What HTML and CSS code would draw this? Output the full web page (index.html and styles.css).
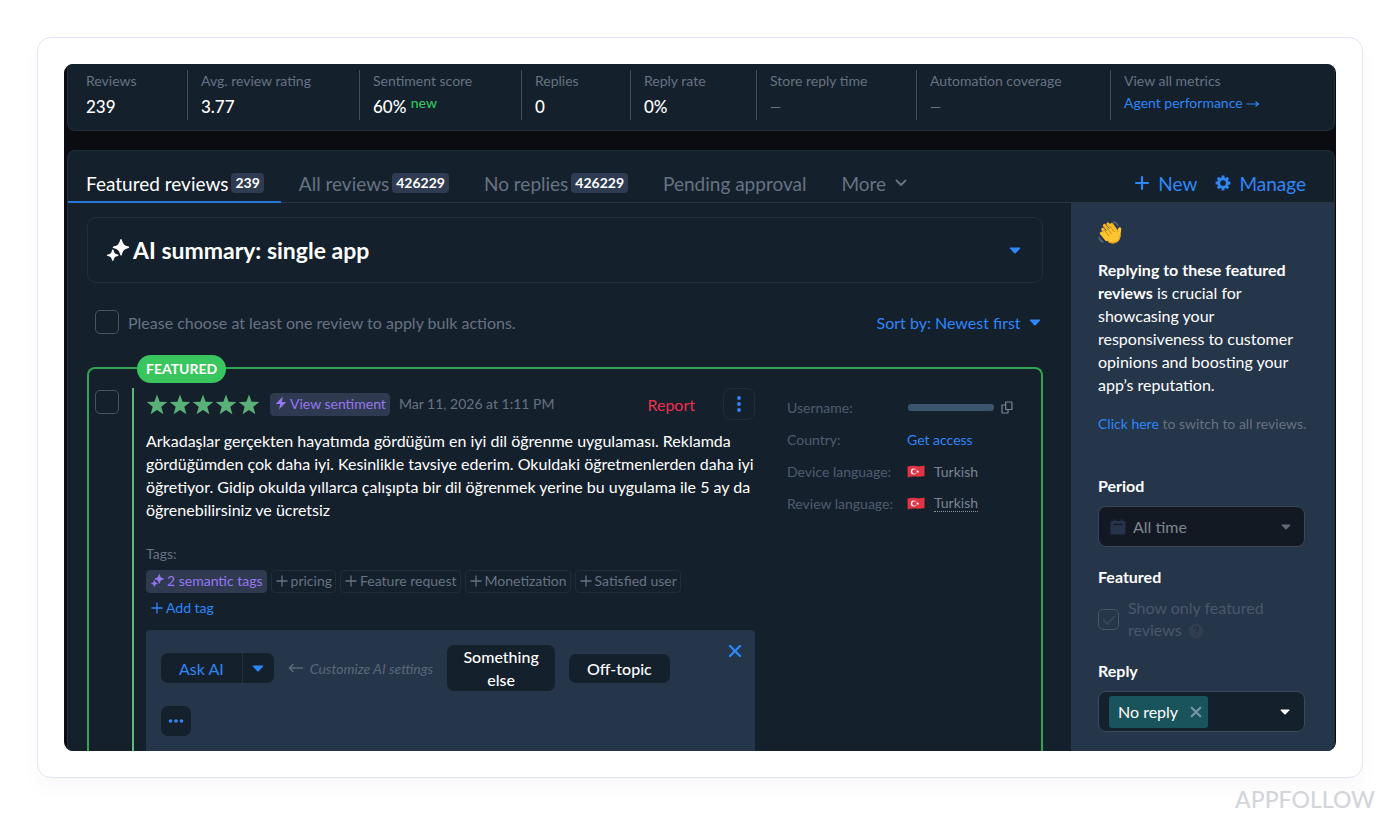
FILE: index.html
```html
<!DOCTYPE html>
<html lang="en">
<head>
<meta charset="utf-8">
<meta name="viewport" content="width=device-width, initial-scale=1">
<title>Featured reviews</title>
<link rel="stylesheet" href="styles.css">
</head>
<body>
<svg class="defs" aria-hidden="true">
  <symbol id="sparkle" viewBox="0 0 22 22"><path stroke="currentColor" stroke-width="1.400" stroke-linejoin="round" d="M14 .8c1.300 4.900 2.600 6.200 7.500 7.500c-4.900 1.300-6.200 2.600-7.500 7.500c-1.300-4.900-2.600-6.200-7.500-7.500c4.900-1.300 6.200-2.600 7.500-7.500z"/><path stroke="currentColor" stroke-width="1.400" stroke-linejoin="round" d="M5.800 11.200c.9 3.600 1.500 4.200 5 5c-3.500.8-4.100 1.400-5 5c-.9-3.600-1.500-4.200-5-5c3.500-.8 4.100-1.400 5-5z"/></symbol>
  <symbol id="caret" viewBox="0 0 12 7"><path d="M1.200 0.500h9.600q.9.300.3 1.100L6.700 6.200q-.7.600-1.400 0L.9 1.600Q.3.800 1.200.5z"/></symbol>
  <symbol id="plus" viewBox="0 0 12 12"><path d="M6 .5v11M.5 6h11" fill="none" stroke="currentColor" stroke-width="1.300"/></symbol>
  <symbol id="cross" viewBox="0 0 14 14"><path d="M2 2l10 10M12 2L2 12" fill="none" stroke="currentColor" stroke-width="2.400" stroke-linecap="round"/></symbol>
  <symbol id="star" viewBox="0 0 22 21"><path d="M11 0.500l2.600 7.200 7.700.3-6 4.700 2.100 7.500L11 15.900l-6.400 4.300 2.100-7.500-6-4.700 7.700-.3z"/></symbol>
  <symbol id="flag" viewBox="0 0 18 13"><path d="M.5 1.500Q4.500.3 9 1t8.500-.5v10.500q-4 1.200-8.500.6T.7 12.500z" fill="#e03343"/><circle cx="6.800" cy="6.500" r="2.900" fill="#fff"/><circle cx="7.600" cy="6.500" r="2.300" fill="#e03343"/><path d="M10.700 4.900l.4 1.100 1.200.1-.9.700.3 1.100-1-.6-1 .6.300-1.100-.9-.7 1.200-.1z" fill="#fff"/></symbol>
</svg>

<main class="card">
  <div class="app">
    <section class="stats" aria-label="Metrics">
      <div class="stat"><span class="stat-label">Reviews</span><span class="stat-value">239</span></div>
      <div class="stat"><span class="stat-label">Avg. review rating</span><span class="stat-value">3.77</span></div>
      <div class="stat"><span class="stat-label">Sentiment score</span><span class="stat-value">60% <sup class="new">new</sup></span></div>
      <div class="stat"><span class="stat-label">Replies</span><span class="stat-value">0</span></div>
      <div class="stat"><span class="stat-label">Reply rate</span><span class="stat-value">0%</span></div>
      <div class="stat"><span class="stat-label">Store reply time</span><span class="stat-value empty">—</span></div>
      <div class="stat"><span class="stat-label">Automation coverage</span><span class="stat-value empty">—</span></div>
      <div class="stat"><span class="stat-label">View all metrics</span><a class="link stat-link" href="#">Agent performance <svg class="i-arrow" viewBox="0 0 14 8"><path d="M0.500 4h12M9.500 1.500L12.500 4l-3 2.500" fill="none" stroke="currentColor" stroke-width="1.200"/></svg></a></div>
    </section>

    <section class="panel">
      <header class="tabbar">
        <nav class="tabs">
          <a class="tab active" href="#">Featured reviews <span class="count">239</span></a>
          <a class="tab" href="#">All reviews <span class="count">426229</span></a>
          <a class="tab" href="#">No replies <span class="count">426229</span></a>
          <a class="tab" href="#">Pending approval</a>
          <button class="tab more" type="button">More <svg class="i-chevron" viewBox="0 0 14 14"><path d="M2.500 4.500L7 9l4.500-4.500" fill="none" stroke="currentColor" stroke-width="2" stroke-linecap="round" stroke-linejoin="round"/></svg></button>
        </nav>
        <div class="tab-actions">
          <button class="action" type="button"><svg class="i-16" viewBox="0 0 16 16"><path d="M8 2v12M2 8h12" fill="none" stroke="currentColor" stroke-width="2.200" stroke-linecap="round"/></svg>New</button>
          <button class="action" type="button"><svg class="i-16" viewBox="0 0 16 16"><circle cx="8" cy="8" r="4.300" fill="none" stroke="currentColor" stroke-width="2.900"/><path d="M8 .6v2.400M8 13v2.400M.6 8H3M13 8h2.400M2.800 2.800l1.700 1.700M11.500 11.500l1.700 1.700M13.200 2.800l-1.700 1.700M4.500 11.500l-1.700 1.700" fill="none" stroke="currentColor" stroke-width="2.800"/></svg>Manage</button>
        </div>
      </header>

      <div class="columns">
        <div class="content">
          <button class="summary" type="button">
            <svg class="i-22"><use href="#sparkle"/></svg>
            <span>AI summary: single app</span>
            <svg class="i-caret push"><use href="#caret"/></svg>
          </button>

          <div class="bulk">
            <label class="bulk-label"><input class="check" type="checkbox">Please choose at least one review to apply bulk actions.</label>
            <label class="sort">Sort by:&nbsp;<select class="sort-select"><option>Newest first</option></select><svg class="i-caret"><use href="#caret"/></svg></label>
          </div>

          <article class="review">
            <span class="ribbon">FEATURED</span>
            <input class="check" type="checkbox" aria-label="Select review">
            <div class="review-body">
              <div class="review-main">
                <div class="meta">
                  <span class="stars" role="img" aria-label="5 stars"><svg class="i-star"><use href="#star"/></svg><svg class="i-star"><use href="#star"/></svg><svg class="i-star"><use href="#star"/></svg><svg class="i-star"><use href="#star"/></svg><svg class="i-star"><use href="#star"/></svg></span>
                  <button class="chip purple" type="button"><svg class="i-bolt" viewBox="0 0 12 14"><path d="M7.800.5L.8 8h4.400L4 13.500 11.200 6H6.800z"/></svg>View sentiment</button>
                  <time class="date" datetime="2026-03-11T13:11">Mar 11, 2026 at 1:11 PM</time>
                  <button class="report" type="button">Report</button>
                  <button class="kebab" type="button" aria-label="More actions"><svg class="i-dots" viewBox="0 0 4 16"><circle cx="2" cy="2" r="1.900"/><circle cx="2" cy="8" r="1.900"/><circle cx="2" cy="14" r="1.900"/></svg></button>
                </div>
                <p class="review-text" lang="tr">Arkadaşlar gerçekten hayatımda gördüğüm en iyi dil öğrenme uygulaması. Reklamda gördüğümden çok daha iyi. Kesinlikle tavsiye ederim. Okuldaki öğretmenlerden daha iyi öğretiyor. Gidip okulda yıllarca çalışıpta bir dil öğrenmek yerine bu uygulama ile 5 ay da öğrenebilirsiniz ve ücretsiz</p>
                <div class="tags-title">Tags:</div>
                <div class="tags">
                  <button class="chip purple" type="button"><svg class="i-spark"><use href="#sparkle"/></svg>2 semantic tags</button>
                  <button class="chip" type="button"><svg class="i-plus"><use href="#plus"/></svg>pricing</button>
                  <button class="chip" type="button"><svg class="i-plus"><use href="#plus"/></svg>Feature request</button>
                  <button class="chip" type="button"><svg class="i-plus"><use href="#plus"/></svg>Monetization</button>
                  <button class="chip" type="button"><svg class="i-plus"><use href="#plus"/></svg>Satisfied user</button>
                  <button class="chip add" type="button"><svg class="i-plus"><use href="#plus"/></svg>Add tag</button>
                </div>
                <div class="ask">
                  <button class="close" type="button" aria-label="Close"><svg class="i-14"><use href="#cross"/></svg></button>
                  <div class="ask-row">
                    <div class="split">
                      <button class="split-main" type="button">Ask AI</button>
                      <button class="split-caret" type="button" aria-label="AI settings"><svg class="i-caret"><use href="#caret"/></svg></button>
                    </div>
                    <span class="hint"><svg class="i-16" viewBox="0 0 16 16"><path d="M15 8H1.500M5.500 4l-4 4 4 4" fill="none" stroke="currentColor" stroke-width="1.600"/></svg><em>Customize AI settings</em></span>
                    <button class="topic wrap" type="button">Something else</button>
                    <button class="topic" type="button">Off-topic</button>
                  </div>
                  <button class="ellipsis" type="button" aria-label="More topics"><svg class="i-ellipsis" viewBox="0 0 16 4"><circle cx="2.500" cy="2" r="1.800"/><circle cx="8" cy="2" r="1.800"/><circle cx="13.500" cy="2" r="1.800"/></svg></button>
                </div>
              </div>
              <dl class="facts">
                <dt>Username:</dt><dd class="user"><span class="masked"></span><svg class="i-copy" viewBox="0 0 12 13"><path d="M4.700 1h6.200v7.500H4.700zM4.700 4H1v8h6V8.500" fill="none" stroke="currentColor" stroke-width="1.200" stroke-linejoin="round"/></svg></dd>
                <dt>Country:</dt><dd><a class="link" href="#">Get access</a></dd>
                <dt>Device language:</dt><dd><svg class="i-flag"><use href="#flag"/></svg>Turkish</dd>
                <dt>Review language:</dt><dd><svg class="i-flag"><use href="#flag"/></svg><span class="dotted">Turkish</span></dd>
              </dl>
            </div>
          </article>
        </div>

        <aside class="sidebar">
          <svg class="i-wave" viewBox="0 0 24 24"><path d="M4.800 8.200L10.500 16M6.500 4.500L13 12.500M10 3l6 7.500M13.700 3.500l4.300 6" stroke="#f5b62e" stroke-width="3.200" stroke-linecap="round" fill="none"/><path d="M4 12l4.500 6.500q3 4.500 8 3.800 5.500-1.300 6-7l.8-7.800q-1.600-2.500-3.300.3L19 11 14 6l-6 4z" fill="#fdc52f"/><path d="M3.500 12.200L8.500 18.500" stroke="#fdc52f" stroke-width="3.200" stroke-linecap="round"/><path d="M6 8.500l5 6.500M8.500 6.500l5 6.500M12 5.500l4.500 5.500" stroke="#c47f16" stroke-width=".9" fill="none"/><path d="M10 20.500q4.500 3 9.500-.5 2.500-2.500 2.800-6" stroke="#f09a1a" stroke-width="1" fill="none"/><path d="M15.500 1.200q3 .3 4.300 3.300M1.200 16.500q.5 3 3.500 4.300" stroke="#56616f" stroke-width="1.800" fill="none" stroke-linecap="round"/></svg>
          <p class="intro"><strong>Replying to these featured reviews</strong> is crucial for showcasing your responsiveness to customer opinions and boosting your app’s reputation.</p>
          <p class="switch"><a class="link" href="#">Click here</a> to switch to all reviews.</p>

          <label class="field-title" for="period">Period</label>
          <div class="period">
            <svg class="i-calendar" viewBox="0 0 16 16"><path d="M3.500.5h2V2h5V.5h2V2H14q1.500 0 1.500 1.500v10.500q0 1.500-1.500 1.500H2Q.5 15.500.5 14V3.500Q.5 2 2 2h1.500z" fill="#26334a"/><path d="M3.500 5.500h9" stroke="#131923" stroke-width="1.300"/></svg>
            <select class="period-select" id="period"><option>All time</option></select>
            <svg class="i-caret-sm"><use href="#caret"/></svg>
          </div>

          <div class="field-title">Featured</div>
          <label class="only"><input class="check checked" type="checkbox" checked disabled><span>Show only featured reviews <svg class="i-help" viewBox="0 0 16 16"><circle cx="8" cy="8" r="7.500" fill="#303e50"/><path d="M5.800 6.300q.2-2 2.200-2t2.200 1.800q0 1.200-1.200 1.800-1 .5-1 1.400M8 10.800v1.500" stroke="#223145" stroke-width="1.500" fill="none"/></svg></span></label>

          <div class="field-title">Reply</div>
          <div class="reply">
            <span class="token">No reply<button class="token-x" type="button" aria-label="Remove No reply"><svg class="i-12"><use href="#cross"/></svg></button></span>
            <button class="reply-caret" type="button" aria-label="Reply options"><svg class="i-caret-sm"><use href="#caret"/></svg></button>
          </div>
        </aside>
      </div>
    </section>
  </div>
</main>
<footer class="brand">APPFOLLOW</footer>
</body>
</html>
```
FILE: styles.css
```css
:root {
  --panel: #15202d;
  --raised: #25354a;
  --line: #222d3a;
  --muted: #677282;
  --dim: #4f5c6e;
  --blue: #2f86f7;
  --green: #30a453;
  --purple: #9677f0;
}

* { box-sizing: border-box; }

body {
  margin: 0;
  padding-top: 37px;
  background: #fff;
  color: #fff;
  font: 16px/23px Lato, sans-serif;
}

button, select, input { font: inherit; color: inherit; margin: 0; }
button { padding: 0; border: 0; background: none; cursor: pointer; }
select { appearance: none; border: 0; background: none; }
p, dl, dd { margin: 0; }
svg { flex: none; fill: currentColor; }
.defs { position: absolute; width: 0; height: 0; }
.link { color: var(--blue); text-decoration: none; }

.i-22 { width: 22px; height: 22px; }
.i-16 { width: 16px; height: 16px; }
.i-14 { width: 14px; height: 14px; }
.i-12 { width: 12px; height: 12px; }
.i-caret { width: 12px; height: 7px; }
.i-caret-sm { width: 10px; height: 6px; }
.i-plus { width: 12px; height: 12px; }
.i-spark { width: 13px; height: 13px; }
.i-star { width: 22px; height: 21px; }
.i-bolt { width: 12px; height: 14px; }
.i-chevron { width: 14px; height: 14px; }
.i-arrow { width: 14px; height: 8px; }
.i-dots { width: 4px; height: 16px; }
.i-ellipsis { width: 16px; height: 4px; }
.i-copy { width: 12px; height: 13px; }
.i-flag { width: 18px; height: 13px; }
.i-wave { width: 24px; height: 24px; }
.i-help { width: 16px; height: 16px; margin-left: 2px; vertical-align: -3px; }

.card {
  margin: 0 37px;
  padding: 26px;
  border: 1px solid #dfe5f7;
  border-radius: 14px;
  background: #fff;
  box-shadow: 0 10px 20px rgba(0, 0, 0, 0.03);
}

.app {
  padding: 0 1px 0 3px;
  overflow: hidden;
  border-radius: 9px;
  background: #0b0c11;
}

.stats {
  display: grid;
  grid-template-columns: 115fr 172fr 162fr 109fr 126fr 160fr 194fr 224fr;
  margin-bottom: 19px;
  padding: 6px 0 10px 4px;
  border: 1px solid var(--line);
  border-top: 0;
  border-radius: 0 0 8px 8px;
  background: var(--panel);
}

.stat {
  display: flex;
  flex-direction: column;
  gap: 3px;
  height: 50px;
  padding-left: 14px;
  white-space: nowrap;
}

.stat + .stat { padding-left: 13px; border-left: 1px solid #414c5c; }
.stat-label { color: var(--muted); font-size: 14px; line-height: 22px; }
.stat-value { font-size: 17px; font-weight: 500; }
.stat-value.empty { color: var(--muted); font-size: 14px; }
.stat-link { font-size: 14px; line-height: 16px; }
.new { color: #35c45d; font-size: 14px; line-height: 0; vertical-align: 5px; }

.panel {
  border: 1px solid var(--line);
  border-bottom: 0;
  border-radius: 8px 8px 0 0;
  background: var(--panel);
}

.tabbar {
  display: flex;
  justify-content: space-between;
  padding-top: 14px;
  border-bottom: 1px solid #283442;
}

.tabs { display: flex; margin-bottom: -1px; }

.tab {
  display: flex;
  align-items: center;
  gap: 3px;
  height: 38px;
  padding: 0 17px 0 18px;
  border-bottom: 2px solid transparent;
  color: var(--muted);
  font-size: 19px;
  text-decoration: none;
  white-space: nowrap;
}

.tab.active { border-color: #2776d8; color: #fff; }
.more { gap: 8px; }

.count {
  padding: 0 4px;
  border-radius: 4px;
  background: #2f3b50;
  color: #fff;
  font-size: 14px;
  font-weight: 700;
  line-height: 20px;
}

.tab-actions { display: flex; gap: 18px; padding-right: 28px; }

.action {
  display: flex;
  align-items: center;
  gap: 8px;
  height: 36px;
  color: var(--blue);
  font-size: 19px;
}

.columns { display: flex; }
.content { flex: 1; min-width: 0; padding: 14px 28px 0 19px; }

.summary {
  display: flex;
  align-items: center;
  gap: 4px;
  width: 100%;
  height: 66px;
  padding: 0 21px 0 19px;
  border: 1px solid var(--line);
  border-radius: 9px;
  font-size: 23px;
  font-weight: 700;
}

.push { margin-left: auto; color: var(--blue); }

.check {
  appearance: none;
  flex: none;
  width: 24px;
  height: 24px;
  border: 1px solid #485365;
  border-radius: 5px;
}

.bulk {
  display: flex;
  align-items: center;
  justify-content: space-between;
  padding: 27px 2px 0 8px;
}

.bulk-label { display: flex; align-items: center; gap: 9px; color: var(--muted); }
.sort { display: flex; align-items: center; color: var(--blue); }
.sort-select { padding: 0 8px 0 0; }

.review {
  position: relative;
  display: flex;
  gap: 13px;
  margin-top: 33px;
  padding: 19px 26px 0 6px;
  border: 2px solid var(--green);
  border-bottom: 0;
  border-radius: 8px 8px 0 0;
}

.review > .check { margin-top: 2px; }

.ribbon {
  position: absolute;
  top: -14px;
  left: 48px;
  padding: 0 9px;
  border-radius: 14px;
  background: #3ac65f;
  font-size: 14px;
  font-weight: 700;
  line-height: 28px;
}

.review-body {
  display: flex;
  flex: 1;
  gap: 32px;
  min-width: 0;
  padding-left: 12px;
  border-left: 2px solid #63b57a;
}

.review-main { flex: 1; min-width: 0; }
.meta { display: flex; align-items: center; height: 32px; }
.stars { display: flex; gap: 1px; margin-right: 10px; color: #5ab177; }

.chip {
  display: flex;
  align-items: center;
  gap: 3px;
  height: 23px;
  padding: 0 3px 2px 4px;
  border: 1px solid var(--line);
  border-radius: 4px;
  color: var(--muted);
  font-size: 14px;
}

.chip.purple { border-color: #2f3a50; background: #2f3a50; color: var(--purple); }
.chip.add { border-color: transparent; color: var(--blue); }
.date { margin-left: 9px; padding-bottom: 2px; color: var(--muted); font-size: 14px; }
.report { margin-left: auto; color: #ee2f4b; }

.kebab {
  display: grid;
  place-items: center;
  width: 32px;
  height: 32px;
  margin-left: 28px;
  border: 1px solid var(--line);
  border-radius: 8px;
  color: var(--blue);
}

.review-text { margin-top: 9px; }
.tags-title { margin-top: 21px; color: var(--muted); font-size: 14px; }
.tags { display: flex; flex-wrap: wrap; gap: 4px; padding-top: 5px; }

.ask {
  position: relative;
  margin-top: 10px;
  padding: 15px;
  border-radius: 4px 4px 0 0;
  background: var(--raised);
}

.close { position: absolute; top: 14px; right: 13px; display: flex; color: var(--blue); }
.ask-row { display: flex; align-items: center; gap: 14px; margin-bottom: 15px; }
.split { display: flex; height: 30px; border-radius: 7px; background: var(--panel); color: var(--blue); }
.split-main { padding: 0 18px; }
.split-caret { display: grid; place-items: center; width: 32px; border-left: 1px solid #25303e; }

.hint {
  display: flex;
  align-items: center;
  gap: 6px;
  color: #5a687a;
  font-size: 14px;
  white-space: nowrap;
}

.topic { padding: 3px 18px; border-radius: 7px; background: var(--panel); font-weight: 500; }
.topic.wrap { max-width: 108px; padding: 0 16px; }

.ellipsis {
  display: grid;
  place-items: center;
  width: 30px;
  height: 30px;
  border-radius: 7px;
  background: var(--panel);
  color: var(--blue);
}

.facts {
  display: grid;
  grid-template-columns: 120px 108px;
  align-content: start;
  gap: 9px 0;
  padding-top: 8px;
  color: var(--dim);
  font-size: 14px;
}

.facts dd { display: flex; align-items: center; color: #7a8492; }
.facts .i-flag { margin-right: 9px; }
.user { gap: 7px; }
.masked { width: 86px; height: 7px; margin-left: 1px; border-radius: 3px; background: #3b5470; }
.dotted { line-height: 16px; border-bottom: 1px dotted #8a939f; }

.sidebar { flex: none; width: 263px; padding: 18px 29px 19px 27px; background: var(--raised); }
.i-wave { display: block; }
.intro { margin-top: 13px; }
.switch { margin-top: 16px; color: var(--muted); font-size: 14px; white-space: nowrap; }
.field-title { display: block; margin-top: 18px; font-weight: 700; }
.switch + .field-title { margin-top: 39px; }

.period { position: relative; display: grid; align-items: center; margin-top: 9px; }

.period-select {
  width: 100%;
  height: 41px;
  padding: 0 34px;
  border: 1px solid #3a4759;
  border-radius: 8px;
  background: #131923;
  color: #7d8590;
}

.period .i-calendar { position: absolute; left: 12px; width: 16px; height: 16px; }
.period .i-caret-sm { position: absolute; right: 14px; color: #5f6a79; }

.only {
  display: flex;
  align-items: center;
  gap: 9px;
  margin-top: 9px;
  color: #4a586b;
  line-height: 22px;
}

.only .check { width: 21px; height: 21px; }

.checked::before {
  content: "";
  display: block;
  width: 10px;
  height: 5px;
  margin: 5px 0 0 4px;
  border: solid #33465a;
  border-width: 0 0 2px 2px;
  transform: rotate(-45deg);
}

.reply {
  display: flex;
  align-items: center;
  justify-content: space-between;
  height: 41px;
  margin-top: 9px;
  padding: 0 14px 0 10px;
  border: 1px solid #3a4a5c;
  border-radius: 8px;
  background: var(--panel);
}

.token {
  display: flex;
  align-items: center;
  gap: 12px;
  height: 32px;
  padding: 0 6px 0 9px;
  border-radius: 3px;
  background: #19535c;
}

.token-x, .reply-caret { display: flex; }
.token-x { color: #7b98a2; }

.brand {
  padding: 10px 25px;
  color: #d3d5da;
  font-size: 23px;
  font-weight: 500;
  text-align: right;
}
```
